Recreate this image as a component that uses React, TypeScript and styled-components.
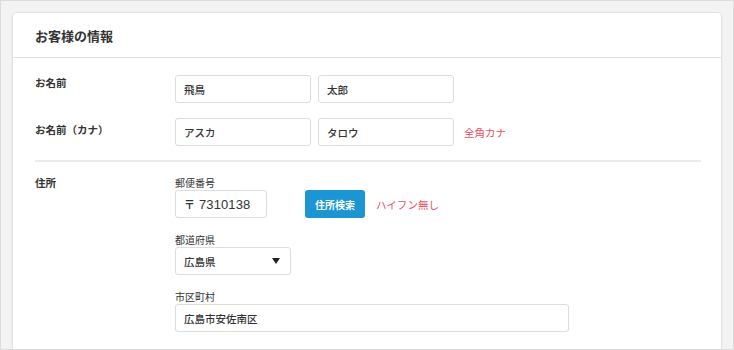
import React from "react";
import styled, { createGlobalStyle } from "styled-components";

const GlobalStyle = createGlobalStyle`
  * { box-sizing: border-box; }
  body {
    margin: 0;
    font-family: "Noto Sans CJK JP", "Noto Sans", "Liberation Sans", sans-serif;
    color: #333333;
  }
`;

const Frame = styled.div`
  width: 734px;
  height: 350px;
  overflow: hidden;
  background-color: #f3f3f3;
  border: 1px solid #dcdcdc;
  padding: 11px 11px 0 11px;
`;

const Card = styled.section`
  background-color: #ffffff;
  border: 1px solid #e2e2e2;
  border-radius: 4px 4px 0 0;
  box-shadow: 0 1px 3px rgba(0, 0, 0, 0.05);
  height: 420px;
`;

const CardHeader = styled.header`
  height: 45px;
  display: flex;
  align-items: center;
  padding: 0 22px;
  border-bottom: 1px solid #e2e2e2;
  h2 {
    margin: 0;
    font-size: 13px;
    font-weight: 700;
    color: #333333;
  }
`;

const CardBody = styled.div`
  padding: 17px 20px 0 22px;
`;

const Row = styled.div<{ $gap?: number }>`
  display: grid;
  grid-template-columns: 140px 1fr;
  margin-bottom: ${(p) => p.$gap ?? 0}px;
`;

const Label = styled.div<{ $offset?: number }>`
  font-size: 10.5px;
  font-weight: 700;
  line-height: 14px;
  padding-top: ${(p) => p.$offset ?? 0}px;
  color: #333333;
`;

const Fields = styled.div`
  display: flex;
  align-items: center;
  gap: 7px;
`;

const Input = styled.input<{ $width: number }>`
  width: ${(p) => p.$width}px;
  height: 28px;
  padding: 0 8px;
  border: 1px solid #dddddd;
  border-radius: 3px;
  background: #ffffff;
  font-family: "Noto Sans CJK JP", "Noto Sans", sans-serif;
  font-size: 10.5px;
  font-weight: 500;
  color: #333333;
  outline: none;
`;

const Note = styled.span<{ $space: number }>`
  margin-left: ${(p) => p.$space}px;
  font-size: 10.5px;
  color: #f0505f;
`;

const Divider = styled.hr`
  border: none;
  border-top: 2px solid #ebebeb;
  margin: 14px 0 14px 0;
`;

const AddressColumn = styled.div`
  display: flex;
  flex-direction: column;
  gap: 15px;
`;

const Field = styled.div`
  display: flex;
  flex-direction: column;
`;

const SubLabel = styled.label`
  font-size: 10px;
  line-height: 13px;
  margin-bottom: 1px;
  color: #333333;
`;

const PostalBox = styled.div`
  width: 92px;
  height: 28px;
  display: flex;
  align-items: center;
  gap: 4px;
  padding: 0 8px;
  border: 1px solid #dddddd;
  border-radius: 3px;
  color: #333333;
  .mark {
    font-size: 11px;
    font-weight: 700;
  }
  .code {
    font-family: "Liberation Sans", Arial, sans-serif;
    font-size: 13px;
    letter-spacing: 0.1px;
  }
`;

const SearchButton = styled.button`
  margin-left: 38px;
  width: 60px;
  height: 28px;
  border: none;
  border-radius: 3px;
  background-color: #1b96d3;
  color: #ffffff;
  font-family: "Noto Sans CJK JP", sans-serif;
  font-size: 10px;
  font-weight: 700;
  padding: 0;
`;

const Select = styled.div`
  width: 116px;
  height: 28px;
  display: flex;
  align-items: center;
  justify-content: space-between;
  padding: 0 8px 0 8px;
  border: 1px solid #dddddd;
  border-radius: 3px;
  font-size: 10.5px;
  font-weight: 500;
  svg {
    margin-right: 2px;
  }
`;

const Inline = styled.div`
  display: flex;
  align-items: center;
`;

export default function App() {
  return (
    <>
      <GlobalStyle />
      <Frame>
        <Card>
          <CardHeader>
            <h2>お客様の情報</h2>
          </CardHeader>
          <CardBody>
            <Row $gap={15}>
              <Label $offset={1}>お名前</Label>
              <Fields>
                <Input $width={136} readOnly value="飛鳥" />
                <Input $width={136} readOnly value="太郎" />
              </Fields>
            </Row>
            <Row>
              <Label $offset={5}>お名前（カナ）</Label>
              <Fields>
                <Input $width={136} readOnly value="アスカ" />
                <Input $width={136} readOnly value="タロウ" />
                <Note $space={3}>全角カナ</Note>
              </Fields>
            </Row>
            <Divider />
            <Row>
              <Label>住所</Label>
              <AddressColumn>
                <Field>
                  <SubLabel>郵便番号</SubLabel>
                  <Inline>
                    <PostalBox>
                      <span className="mark">〒</span>
                      <span className="code">7310138</span>
                    </PostalBox>
                    <SearchButton>住所検索</SearchButton>
                    <Note $space={11}>ハイフン無し</Note>
                  </Inline>
                </Field>
                <Field>
                  <SubLabel>都道府県</SubLabel>
                  <Select>
                    <span>広島県</span>
                    <svg width="8" height="6" viewBox="0 0 8 6">
                      <path d="M0 0 H8 L4 6 Z" fill="#222222" />
                    </svg>
                  </Select>
                </Field>
                <Field>
                  <SubLabel>市区町村</SubLabel>
                  <Input $width={394} readOnly value="広島市安佐南区" />
                </Field>
              </AddressColumn>
            </Row>
          </CardBody>
        </Card>
      </Frame>
    </>
  );
}
